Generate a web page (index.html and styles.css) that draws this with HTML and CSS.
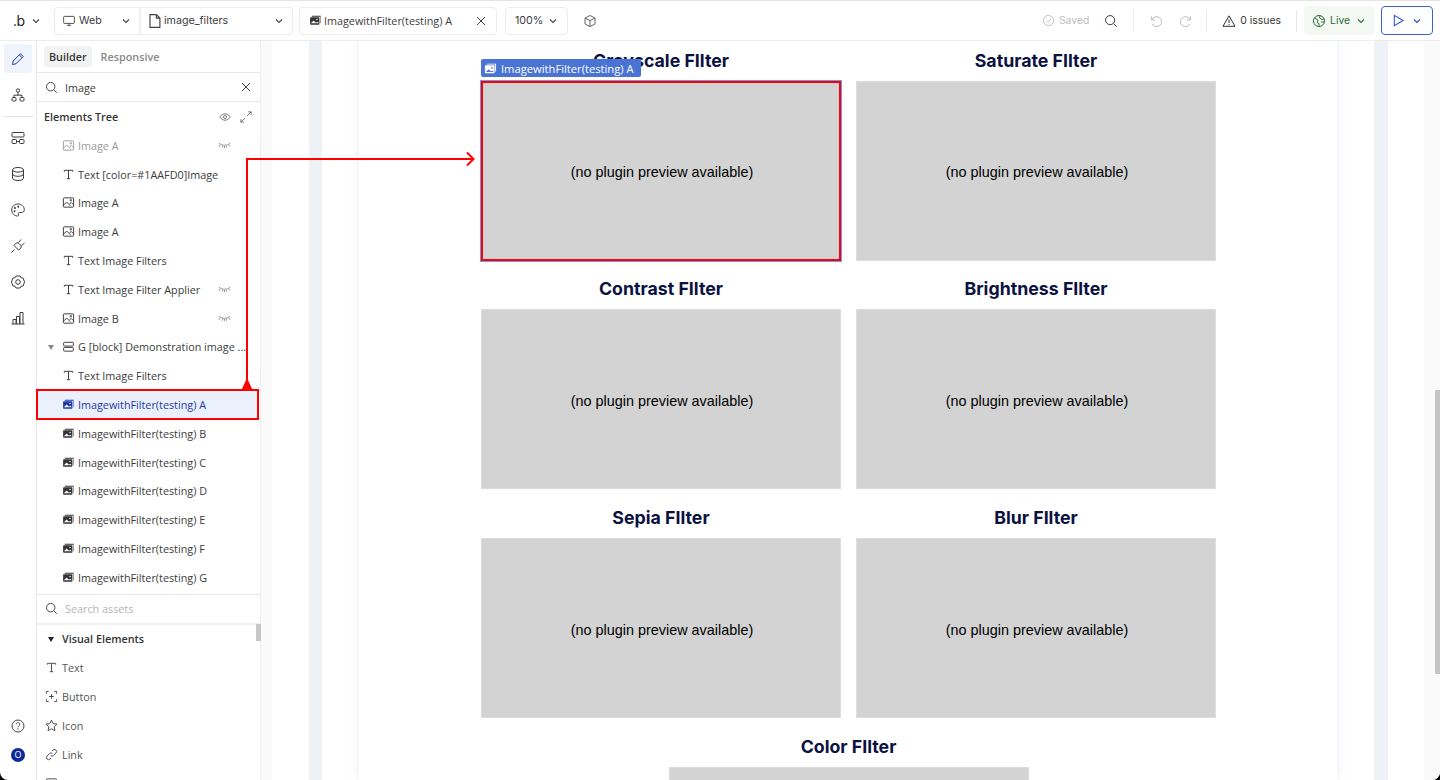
FILE: index.html
```html
<!DOCTYPE html>
<html lang="en">
<head>
    <meta charset="UTF-8">
    <title>image_filters | Builder</title>
    <link rel="stylesheet" href="styles.css">
</head>
<body>
<svg class="defs" width="0" height="0">
    <symbol id="i-chev" viewBox="0 0 10 10"><path d="M2 3.500 5 6.500 8 3.500" fill="none" stroke="currentColor" stroke-width="1.100"/></symbol>
    <symbol id="i-search" viewBox="0 0 16 16"><circle cx="7" cy="7" r="5.200" fill="none" stroke="currentColor" stroke-width="1.100"/><path d="M11 11 14.500 14.500" stroke="currentColor" stroke-width="1.100"/></symbol>
    <symbol id="i-x" viewBox="0 0 12 12"><path d="M2 2 10 10M10 2 2 10" stroke="currentColor" stroke-width="1"/></symbol>
    <symbol id="i-image" viewBox="0 0 14 14"><g fill="none" stroke="currentColor" stroke-width="1"><rect x="1.500" y="2" width="11" height="10" rx=".8"/><path d="M1.500 10 5 6.500 9 10.500M8 8.500 10 7 12.500 9.500"/><circle cx="9.500" cy="4.600" r=".8"/></g></symbol>
    <symbol id="i-text" viewBox="0 0 14 14"><path d="M2.500 4V2.500h9V4M7 2.500v9M5.200 11.500h3.600" fill="none" stroke="currentColor" stroke-width="1"/></symbol>
    <symbol id="i-photo" viewBox="0 0 14 14"><path d="M3 2h9.500v8H12V3H3z" fill="currentColor"/><rect x="1.200" y="3.600" width="10" height="8" rx=".8" fill="currentColor"/><path d="M2 10 5 7 7.500 9.500 9 8.400 10.500 10z" fill="#fff"/><circle cx="8.600" cy="5.800" r=".8" fill="#fff"/></symbol>
    <symbol id="i-photo-label" viewBox="0 0 14 14"><path d="M3 1.800h10v8.400h-1V2.800H3z" fill="#fff"/><rect x="1" y="3.600" width="10.400" height="8.400" rx=".8" fill="#fff"/><path d="M2 10.800 5 7.800 7.500 10.300 9 9.200 10.500 10.800z" fill="#4a74d4"/><circle cx="8.600" cy="6.200" r=".9" fill="#4a74d4"/></symbol>
    <symbol id="i-lash" viewBox="0 0 14 8"><path d="M1 2c3 3 9 3 12 0M1 6l1.600-2.200M4.600 7l.7-2.400M7 7.400V5M9.400 7l-.7-2.400M13 6l-1.600-2.200" fill="none" stroke="currentColor" stroke-width=".8"/></symbol>
    <symbol id="i-block" viewBox="0 0 14 14"><g fill="none" stroke="currentColor" stroke-width="1"><rect x="1.800" y="2.500" width="10.400" height="4" rx=".8"/><rect x="1.800" y="8" width="10.400" height="4" rx=".8"/></g></symbol>
</svg>

<div class="app">
    <header class="topbar">
        <div class="brand"><span class="logo">.b</span><svg class="chev"><use href="#i-chev"/></svg></div>

        <div class="select-group">
            <div class="select select-web">
                <svg class="ico" viewBox="0.500 1.500 13 12"><path d="M2 2.500h10a.8.8 0 0 1 .8.8v6a.8.8 0 0 1-.8.8H2a.8.8 0 0 1-.8-.8v-6a.8.8 0 0 1 .8-.8zM5 12.300h4M7 10v2" fill="none" stroke="currentColor"/></svg>
                <span>Web</span><svg class="chev"><use href="#i-chev"/></svg>
            </div>
            <div class="select select-page">
                <svg class="ico" viewBox="2.300 1 10 12"><path d="M3 1.500h5.500L11.500 4.500v8H3zM8.500 1.500v3h3" fill="none" stroke="currentColor"/></svg>
                <span>image_filters</span><svg class="chev"><use href="#i-chev"/></svg>
            </div>
        </div>

        <div class="select select-tab">
            <svg class="ico-sm"><use href="#i-photo"/></svg>
            <span>ImagewithFilter(testing) A</span>
            <svg class="tab-x"><use href="#i-x"/></svg>
        </div>

        <div class="select select-zoom"><span>100%</span><svg class="chev"><use href="#i-chev"/></svg></div>

        <svg class="cube" viewBox="0 0 14 14"><path d="M7 1.500 12 4v6L7 12.500 2 10V4zM2 4l5 2.500L12 4M7 6.500v6" fill="none" stroke="currentColor" stroke-width=".9"/></svg>

        <div class="actions">
            <div class="saved">
                <svg viewBox="0 0 14 14"><circle cx="7" cy="7" r="5.500" fill="none" stroke="currentColor"/><path d="M4.500 7.200 6.300 9l3.300-3.600" fill="none" stroke="currentColor"/></svg>
                <span>Saved</span>
            </div>
            <svg class="top-search"><use href="#i-search"/></svg>
            <i class="vsep sep-a"></i>
            <svg class="hist hist-undo" viewBox="0 0 14 14"><path d="M2.500 2.500v3.500H6M2.800 6A5 5 0 1 1 3 9.800" fill="none" stroke="currentColor"/></svg>
            <svg class="hist hist-redo" viewBox="0 0 14 14"><path d="M11.500 2.500v3.500H8M11.200 6A5 5 0 1 0 11 9.800" fill="none" stroke="currentColor"/></svg>
            <i class="vsep sep-b"></i>
            <div class="issues">
                <svg viewBox="0 0 14 14"><path d="M7 1.800 13 12.300H1zM7 5.500v3.500M7 10v1" fill="none" stroke="currentColor"/></svg>
                <span>0 issues</span>
            </div>
            <i class="vsep sep-c"></i>
            <div class="live">
                <svg class="globe" viewBox="0 0 14 14"><circle cx="7" cy="7" r="5.500" fill="none" stroke="currentColor"/><path d="M2.500 4 6 6 5 8.500l2 1v3M8 1.700 7.500 4 10 5.500l2.400-.6M9 8h3" fill="none" stroke="currentColor" stroke-width=".9"/></svg>
                <span>Live</span><svg class="chev"><use href="#i-chev"/></svg>
            </div>
            <div class="play">
                <svg class="play-ico" viewBox="0 0 14 14"><path d="M2.500 1.500 12 7 2.500 12.500z" fill="none" stroke="currentColor" stroke-width="1.100"/></svg>
                <svg class="chev"><use href="#i-chev"/></svg>
            </div>
        </div>
    </header>

    <div class="workspace">
        <nav class="rail">
            <a class="rail-btn active"><svg viewBox="0 0 16 16"><path d="M2.500 13.500 3.200 10 10.500 2.700l2.800 2.800L6 12.800zM9.300 3.900l2.800 2.800" fill="none" stroke="currentColor"/></svg></a>
            <a class="rail-btn"><svg viewBox="0 0 16 16"><g fill="none" stroke="currentColor"><circle cx="8" cy="3.500" r="1.700"/><rect x="2" y="10.500" width="4" height="3.500" rx="1"/><rect x="10" y="10.500" width="4" height="3.500" rx="1"/><path d="M8 5.200v3M4 10.500V8.200h8v2.300"/></g></svg></a>
            <hr class="rail-sep">
            <a class="rail-btn"><svg viewBox="0 0 16 16"><g fill="none" stroke="currentColor"><rect x="2" y="2.500" width="12" height="4.500" rx=".8"/><rect x="2" y="9.500" width="4.500" height="4" rx=".8"/><rect x="9.500" y="9.500" width="4.500" height="4" rx=".8"/><path d="M6.500 11.500h3"/></g></svg></a>
            <a class="rail-btn"><svg viewBox="0 0 16 16"><g fill="none" stroke="currentColor"><ellipse cx="8" cy="3.800" rx="5.500" ry="2.300"/><path d="M2.500 3.800v8.400c0 1.300 2.500 2.300 5.500 2.300s5.500-1 5.500-2.300V3.800M2.500 8c0 1.300 2.500 2.300 5.500 2.300s5.500-1 5.500-2.300"/></g></svg></a>
            <a class="rail-btn"><svg viewBox="0 0 16 16"><path d="M8 2C4.300 2 1.700 4.700 1.700 8s2.600 6 5.800 6c1.300 0 1.300-1 .9-1.800-.4-.9.1-1.700 1.200-1.700h2c1.500 0 2.700-1 2.700-2.700C14.300 4.500 11.500 2 8 2z" fill="none" stroke="currentColor"/><circle cx="5" cy="6" r="1" fill="currentColor"/><circle cx="8.300" cy="4.800" r="1" fill="currentColor"/><circle cx="4.500" cy="9.300" r="1" fill="currentColor"/></svg></a>
            <a class="rail-btn"><svg viewBox="0 0 16 16"><path d="M1.500 14.500 4.500 11.500M4 7.500 8.500 12l1.700-1.200c1.200-1 1.300-2.700.3-3.800L9 5.500C7.900 4.500 6.300 4.700 5.300 5.800zM8.500 4.500l2.500-3M11.500 7.500l3-2.500" fill="none" stroke="currentColor"/></svg></a>
            <a class="rail-btn"><svg viewBox="0 0 16 16"><path d="M6 2h4l1 1.800 2.100.2 1.400 4-1.400 4-2.100.2-1 1.800H6l-1-1.800-2.100-.2L1.500 8l1.400-4L5 3.800z" fill="none" stroke="currentColor"/><circle cx="8" cy="8" r="2.300" fill="none" stroke="currentColor"/></svg></a>
            <a class="rail-btn"><svg viewBox="0 0 16 16"><path d="M1.500 14h13M3 14V9.500h3V14M6.500 14V6.500h3V14M10 14V2.500h3V14" fill="none" stroke="currentColor"/></svg></a>
            <div class="rail-bottom">
                <svg class="help" viewBox="0 0 16 16"><circle cx="8" cy="8" r="6" fill="none" stroke="currentColor"/><path d="M6.200 6.300C6.300 4 9.800 4 9.800 6.300 9.800 7.800 8 7.700 8 9.300M8 10.400v1.200" fill="none" stroke="currentColor"/></svg>
                <span class="avatar">O</span>
            </div>
        </nav>

        <aside class="panel">
            <div class="tabs">
                <span class="tab current">Builder</span>
                <span class="tab">Responsive</span>
            </div>
            <div class="search-row">
                <svg class="search-ico"><use href="#i-search"/></svg>
                <span class="search-value">Image</span>
                <svg class="search-clear"><use href="#i-x"/></svg>
            </div>
            <div class="tree-head">
                <strong>Elements Tree</strong>
                <svg class="head-ico" viewBox="0 0 14 14"><path d="M1 7c3-5 9-5 12 0-3 5-9 5-12 0z" fill="none" stroke="currentColor" stroke-width=".9"/><circle cx="7" cy="7" r="1.800" fill="none" stroke="currentColor" stroke-width=".9"/></svg>
                <svg class="head-ico" viewBox="0 0 14 14"><path d="M8 6 13 1M9.500 1H13v3.500M6 8l-5 5M1 9.500V13h3.500" fill="none" stroke="currentColor" stroke-width=".9"/></svg>
            </div>
            <ul class="tree">
                <li class="dim"><svg><use href="#i-image"/></svg>Image A<svg class="lash"><use href="#i-lash"/></svg></li>
                <li><svg><use href="#i-text"/></svg>Text [color=#1AAFD0]Image</li>
                <li><svg><use href="#i-image"/></svg>Image A</li>
                <li><svg><use href="#i-image"/></svg>Image A</li>
                <li><svg><use href="#i-text"/></svg>Text Image Filters</li>
                <li><svg><use href="#i-text"/></svg>Text Image Filter Applier<svg class="lash"><use href="#i-lash"/></svg></li>
                <li><svg><use href="#i-image"/></svg>Image B<svg class="lash"><use href="#i-lash"/></svg></li>
                <li><b class="caret"></b><svg><use href="#i-block"/></svg>G [block] Demonstration image ...</li>
                <li><svg><use href="#i-text"/></svg>Text Image Filters</li>
                <li class="picked"><svg><use href="#i-photo"/></svg>ImagewithFilter(testing) A</li>
                <li><svg><use href="#i-photo"/></svg>ImagewithFilter(testing) B</li>
                <li><svg><use href="#i-photo"/></svg>ImagewithFilter(testing) C</li>
                <li><svg><use href="#i-photo"/></svg>ImagewithFilter(testing) D</li>
                <li><svg><use href="#i-photo"/></svg>ImagewithFilter(testing) E</li>
                <li><svg><use href="#i-photo"/></svg>ImagewithFilter(testing) F</li>
                <li><svg><use href="#i-photo"/></svg>ImagewithFilter(testing) G</li>
            </ul>
            <div class="assets-search">
                <svg class="search-ico"><use href="#i-search"/></svg>
                <span>Search assets</span>
            </div>
            <div class="assets">
                <div class="assets-title"><b class="caret dark"></b>Visual Elements</div>
                <div class="asset"><svg><use href="#i-text"/></svg>Text</div>
                <div class="asset"><svg viewBox="0 0 14 14"><path d="M1.500 4V1.500H4M10 1.500h2.500V4M12.500 10v2.500H10M4 12.500H1.500V10M7 4.500v5M4.500 7h5" fill="none" stroke="currentColor"/></svg>Button</div>
                <div class="asset"><svg viewBox="0 0 14 14"><path d="M7 1.200 8.800 5l4.200.5-3.100 2.900.8 4.200L7 10.500l-3.700 2.100.8-4.200L1 5.500 5.200 5z" fill="none" stroke="currentColor"/></svg>Icon</div>
                <div class="asset"><svg viewBox="0 0 14 14"><path d="M6 8a2.200 2.200 0 0 0 3.200 0l2.600-2.600a2.200 2.200 0 0 0-3.200-3.200L7.500 3.300M8 6a2.200 2.200 0 0 0-3.200 0L2.200 8.600a2.200 2.200 0 0 0 3.200 3.200l1.100-1.100" fill="none" stroke="currentColor"/></svg>Link</div>
                <div class="asset"><svg><use href="#i-image"/></svg>Image</div>
            </div>
            <i class="assets-thumb"></i>
        </aside>

        <main class="canvas">
            <div class="stage">
                <div class="gutter">
                    <div class="margin">
                        <section class="page">
                            <div class="filters">
                                <div class="filter">
                                    <h2>Grayscale FIlter</h2>
                                    <div class="preview selected">(no plugin preview available)</div>
                                </div>
                                <div class="filter">
                                    <h2>Saturate FIlter</h2>
                                    <div class="preview">(no plugin preview available)</div>
                                </div>
                                <div class="filter">
                                    <h2>Contrast FIlter</h2>
                                    <div class="preview">(no plugin preview available)</div>
                                </div>
                                <div class="filter">
                                    <h2>Brightness FIlter</h2>
                                    <div class="preview">(no plugin preview available)</div>
                                </div>
                                <div class="filter">
                                    <h2>Sepia FIlter</h2>
                                    <div class="preview">(no plugin preview available)</div>
                                </div>
                                <div class="filter">
                                    <h2>Blur FIlter</h2>
                                    <div class="preview">(no plugin preview available)</div>
                                </div>
                                <div class="filter filter-wide">
                                    <h2>Color FIlter</h2>
                                    <div class="preview">(no plugin preview available)</div>
                                </div>
                            </div>
                        </section>
                    </div>
                </div>
            </div>
            <div class="sel-label"><svg><use href="#i-photo-label"/></svg>ImagewithFilter(testing) A</div>
            <i class="canvas-thumb"></i>
        </main>
    </div>

    <!-- red callout from the tree row to the canvas element -->
    <svg class="callout" width="1440" height="780">
        <path d="M247 381V159H473" fill="none" stroke="#f00" stroke-width="2"/>
        <path d="M467 152.500 473.500 159 467 165.500" fill="none" stroke="#f00" stroke-width="2"/>
        <path d="M247 378 253 391H241z" fill="#f00"/>
    </svg>
</div>
</body>
</html>
```

FILE: styles.css
```css
* {
    box-sizing: border-box;
    margin: 0;
    padding: 0;
}

html, body {
    height: 100%;
    overflow: hidden;
}

body {
    background-color: #000;
    font-family: "Open Sans", "Liberation Sans", sans-serif;
    font-size: 10.8px;
    color: #3c3c3c;
}

.defs {
    position: absolute;
}

.app {
    position: relative;
    display: flex;
    flex-direction: column;
    width: 1440px;
    height: 780px;
    background-color: #fff;
    border-bottom-left-radius: 8px;
    border-bottom-right-radius: 8px;
    overflow: hidden;
}

/* Top bar */
.topbar {
    display: flex;
    align-items: center;
    flex: none;
    height: 41px;
    border-top: 1px solid #e4e4e4;
    border-bottom: 1px solid #ececec;
    padding-left: 12px;
}

.chev {
    width: 10px;
    height: 10px;
    flex: none;
    color: #444;
}

.brand {
    display: flex;
    align-items: center;
    width: 42px;
}

.logo {
    width: 19px;
    padding-left: 1px;
    font-family: "Inter", sans-serif;
    font-size: 14px;
    color: #222;
    letter-spacing: -0.5px;
}

.select-group {
    display: flex;
    height: 28px;
    border: 1px solid #ececec;
    border-radius: 4px;
}

.select {
    display: flex;
    align-items: center;
    color: #3c3c3c;
}

.select .chev {
    margin-left: auto;
}

.ico {
    width: 12px;
    height: 14px;
    flex: none;
    color: #444;
}

.ico-sm {
    width: 13px;
    height: 13px;
    flex: none;
    color: #333;
}

.select-web {
    width: 86px;
    padding: 0 8px;
    gap: 4px;
    border-right: 2px solid #f0f0f0;
    font-family: "Inter", sans-serif;
    font-size: 10.7px;
}

.select-page {
    width: 151px;
    padding: 0 8px;
    gap: 3px;
    font-family: "Inter", sans-serif;
    font-size: 10.7px;
}

.select-tab {
    width: 198px;
    height: 28px;
    margin-left: 6px;
    padding: 0 9px;
    gap: 2px;
    border: 1px solid #ececec;
    border-radius: 4px;
}

.tab-x {
    width: 12px;
    height: 12px;
    margin-left: auto;
    color: #444;
}

.select-zoom {
    width: 63px;
    height: 28px;
    margin-left: 8px;
    padding: 0 9px;
    border: 1px solid #ececec;
    border-radius: 4px;
    font-family: "Inter", sans-serif;
    font-size: 10.7px;
}

.cube {
    width: 14px;
    height: 14px;
    margin-left: 15px;
    color: #555;
}

.actions {
    display: flex;
    align-items: center;
    margin-left: auto;
    height: 100%;
    font-family: "Inter", sans-serif;
    font-size: 10.4px;
}

.saved {
    display: flex;
    align-items: center;
    gap: 4px;
    color: #bdbdbd;
}

.saved svg {
    width: 13px;
    height: 13px;
}

.top-search {
    width: 14px;
    height: 14px;
    margin-left: 15px;
    color: #333;
}

.vsep {
    width: 1px;
    height: 22px;
    background-color: #e8e8e8;
}

.sep-a { margin-left: 15px; }
.sep-b { margin-left: 13px; }
.sep-c { margin-left: 15px; }

.hist {
    width: 14px;
    height: 14px;
    color: #bdbdbd;
}

.hist-undo { margin-left: 15px; }
.hist-redo { margin-left: 16px; }

.issues {
    display: flex;
    align-items: center;
    gap: 4px;
    margin-left: 15px;
    color: #333;
}

.issues svg {
    width: 14px;
    height: 14px;
}

.live {
    display: flex;
    align-items: center;
    gap: 4px;
    width: 70px;
    height: 29px;
    margin-left: 7px;
    padding: 0 8px;
    border-radius: 4px;
    background-color: #f3f8f3;
    color: #2e6b34;
}

.live svg.globe {
    width: 14px;
    height: 14px;
}

.live .chev {
    margin-left: auto;
    color: #2e6b34;
}

.play {
    display: flex;
    align-items: center;
    justify-content: space-between;
    width: 52px;
    height: 29px;
    margin: 0 7px;
    padding: 0 10px;
    border: 1px solid #3f5fd8;
    border-radius: 4px;
    color: #2f49c8;
}

.play-ico {
    width: 13px;
    height: 13px;
}

.play .chev {
    color: #2f49c8;
}

/* Left side */
.workspace {
    display: flex;
    flex: 1;
    min-height: 0;
}

.rail {
    display: flex;
    flex-direction: column;
    align-items: center;
    flex: none;
    width: 37px;
    border-right: 1px solid #e8e8e8;
    padding-top: 3px;
}

.rail-btn {
    display: flex;
    align-items: center;
    justify-content: center;
    flex: none;
    width: 28px;
    height: 29px;
    margin-bottom: 7px;
    border-radius: 3px;
    color: #3c3c3c;
}

.rail-btn svg {
    width: 16px;
    height: 16px;
}

.rail-btn.active {
    background-color: #eef3fc;
    color: #1f3bb3;
}

.rail-sep {
    width: 29px;
    margin: 0 0 6px;
    border: 0;
    border-top: 1px solid #e4e4e4;
}

.rail-bottom {
    display: flex;
    flex-direction: column;
    align-items: center;
    gap: 14px;
    margin-top: auto;
    padding-bottom: 18px;
}

.help {
    width: 16px;
    height: 16px;
    color: #444;
}

.avatar {
    width: 14px;
    height: 14px;
    border-radius: 50%;
    background-color: #0c2a9c;
    color: #fff;
    font-size: 9px;
    line-height: 14px;
    text-align: center;
}

.panel {
    position: relative;
    display: flex;
    flex-direction: column;
    flex: none;
    width: 224px;
    border-right: 1px solid #ececec;
}

.tabs {
    display: flex;
    align-items: center;
    gap: 4px;
    flex: none;
    height: 32px;
    padding: 0 7px;
    border-bottom: 1px solid #e8e8e8;
}

.tab {
    padding: 3px 5px;
    border-radius: 3px;
    font-weight: 600;
    color: #8a8a8a;
}

.tab.current {
    background-color: #f2f2f2;
    color: #333;
}

.search-row {
    display: flex;
    align-items: center;
    flex: none;
    height: 29px;
    padding: 0 8px;
    border-bottom: 1px solid #e8e8e8;
}

.search-ico {
    width: 13px;
    height: 13px;
    flex: none;
    color: #333;
}

.search-value {
    margin-left: 7px;
}

.search-clear {
    width: 12px;
    height: 12px;
    margin-left: auto;
    color: #444;
}

.tree-head {
    display: flex;
    align-items: center;
    gap: 9px;
    flex: none;
    height: 29px;
    padding: 0 8px 0 7px;
}

.tree-head strong {
    margin-right: auto;
    font-weight: 600;
    color: #333;
}

.head-ico {
    width: 12px;
    height: 12px;
    color: #555;
}

.tree {
    flex: none;
    height: 464px;
    list-style-type: none;
    border-bottom: 1px solid #e8e8e8;
}

.tree li {
    position: relative;
    display: flex;
    align-items: center;
    height: 28.8px;
    padding-left: 25px;
    white-space: nowrap;
}

.tree li > svg:first-of-type {
    width: 13px;
    height: 13px;
    margin-right: 3px;
    flex: none;
    color: #333;
}

.tree li svg.lash {
    position: absolute;
    left: 181px;
    width: 13px;
    height: 8px;
    margin: 0;
    color: #777;
}

.tree li.dim {
    color: #9c9c9c;
}

.tree li.dim > svg:first-of-type {
    color: #9c9c9c;
}

.tree li.picked {
    width: 221px;
    background-color: #ebf1fc;
    color: #1f3aa8;
    outline: 2px solid #f00;
    outline-offset: -1px;
}

.tree li.picked > svg:first-of-type {
    color: #1f3aa8;
}

.caret {
    position: absolute;
    left: 11px;
    top: 12px;
    border-left: 3.5px solid transparent;
    border-right: 3.5px solid transparent;
    border-top: 5px solid #8a8a8a;
}

.assets-search {
    display: flex;
    align-items: center;
    gap: 7px;
    flex: none;
    height: 30px;
    padding: 0 8px 1px;
    border-bottom: 2px solid #f0f0f0;
    color: #b5b5b5;
}

.assets {
    flex: 1;
    overflow: hidden;
}

.assets-title {
    position: relative;
    height: 28px;
    padding-left: 25px;
    line-height: 28px;
    font-weight: 600;
    color: #333;
}

.caret.dark {
    border-top-color: #222;
}

.asset {
    display: flex;
    align-items: center;
    gap: 4px;
    height: 29px;
    padding-left: 8px;
    color: #555;
}

.asset svg {
    width: 13px;
    height: 13px;
    flex: none;
    color: #444;
}

.assets-thumb {
    position: absolute;
    right: -1px;
    top: 583px;
    width: 5px;
    height: 17px;
    background-color: #c6c6c6;
}

/* Canvas */
.canvas {
    position: relative;
    flex: 1;
    min-width: 0;
    padding: 0 16px 0 11px;
    background-color: #fafafa;
    overflow: hidden;
}

.stage {
    height: 100%;
    padding: 0 36px 0 37px;
    background-color: #fff;
}

.gutter {
    height: 100%;
    padding: 0 14px 0 13px;
    background-color: #eef1f5;
}

.margin {
    height: 100%;
    padding: 0 37px;
    background-color: #fff;
}

.page {
    display: flex;
    justify-content: center;
    height: 100%;
    padding: 8.5px 0 0 1px;
    background-color: #fff;
    box-shadow: 0 0 10px rgba(190, 198, 220, 0.35);
    font-family: "Liberation Sans", Arial, sans-serif;
}

.filters {
    display: grid;
    grid-template-columns: 360px 360px;
    column-gap: 15px;
    row-gap: 17.8px;
    align-content: start;
}

.filter h2 {
    height: 22px;
    margin-bottom: 9px;
    font-family: "Inter", sans-serif;
    font-size: 17.75px;
    font-weight: 700;
    line-height: 22px;
    text-align: center;
    color: #0b1240;
}

.filter-wide {
    grid-column: 1 / -1;
    justify-self: center;
    width: 360px;
}

.preview {
    display: flex;
    align-items: center;
    justify-content: center;
    height: 180px;
    padding: 3px 0 0 2px;
    border: 1px solid #dcdcdc;
    background-color: #d3d3d3;
    font-size: 14.4px;
    color: #000;
}

.preview.selected {
    border: 2px solid #f00;
    outline: 1px solid #6a9be8;
}

.sel-label {
    position: absolute;
    left: 220px;
    top: 18px;
    display: flex;
    align-items: center;
    gap: 4px;
    width: 160px;
    height: 18px;
    padding-left: 3px;
    border-radius: 2px;
    background-color: #4a74d4;
    font-size: 11.2px;
    color: #fff;
    white-space: nowrap;
}

.sel-label svg {
    width: 13px;
    height: 13px;
}

.canvas-thumb {
    position: absolute;
    right: 0;
    top: 349px;
    width: 5px;
    height: 284px;
    background-color: #c4c4c4;
}

.callout {
    position: absolute;
    left: 0;
    top: 0;
    pointer-events: none;
}
```
